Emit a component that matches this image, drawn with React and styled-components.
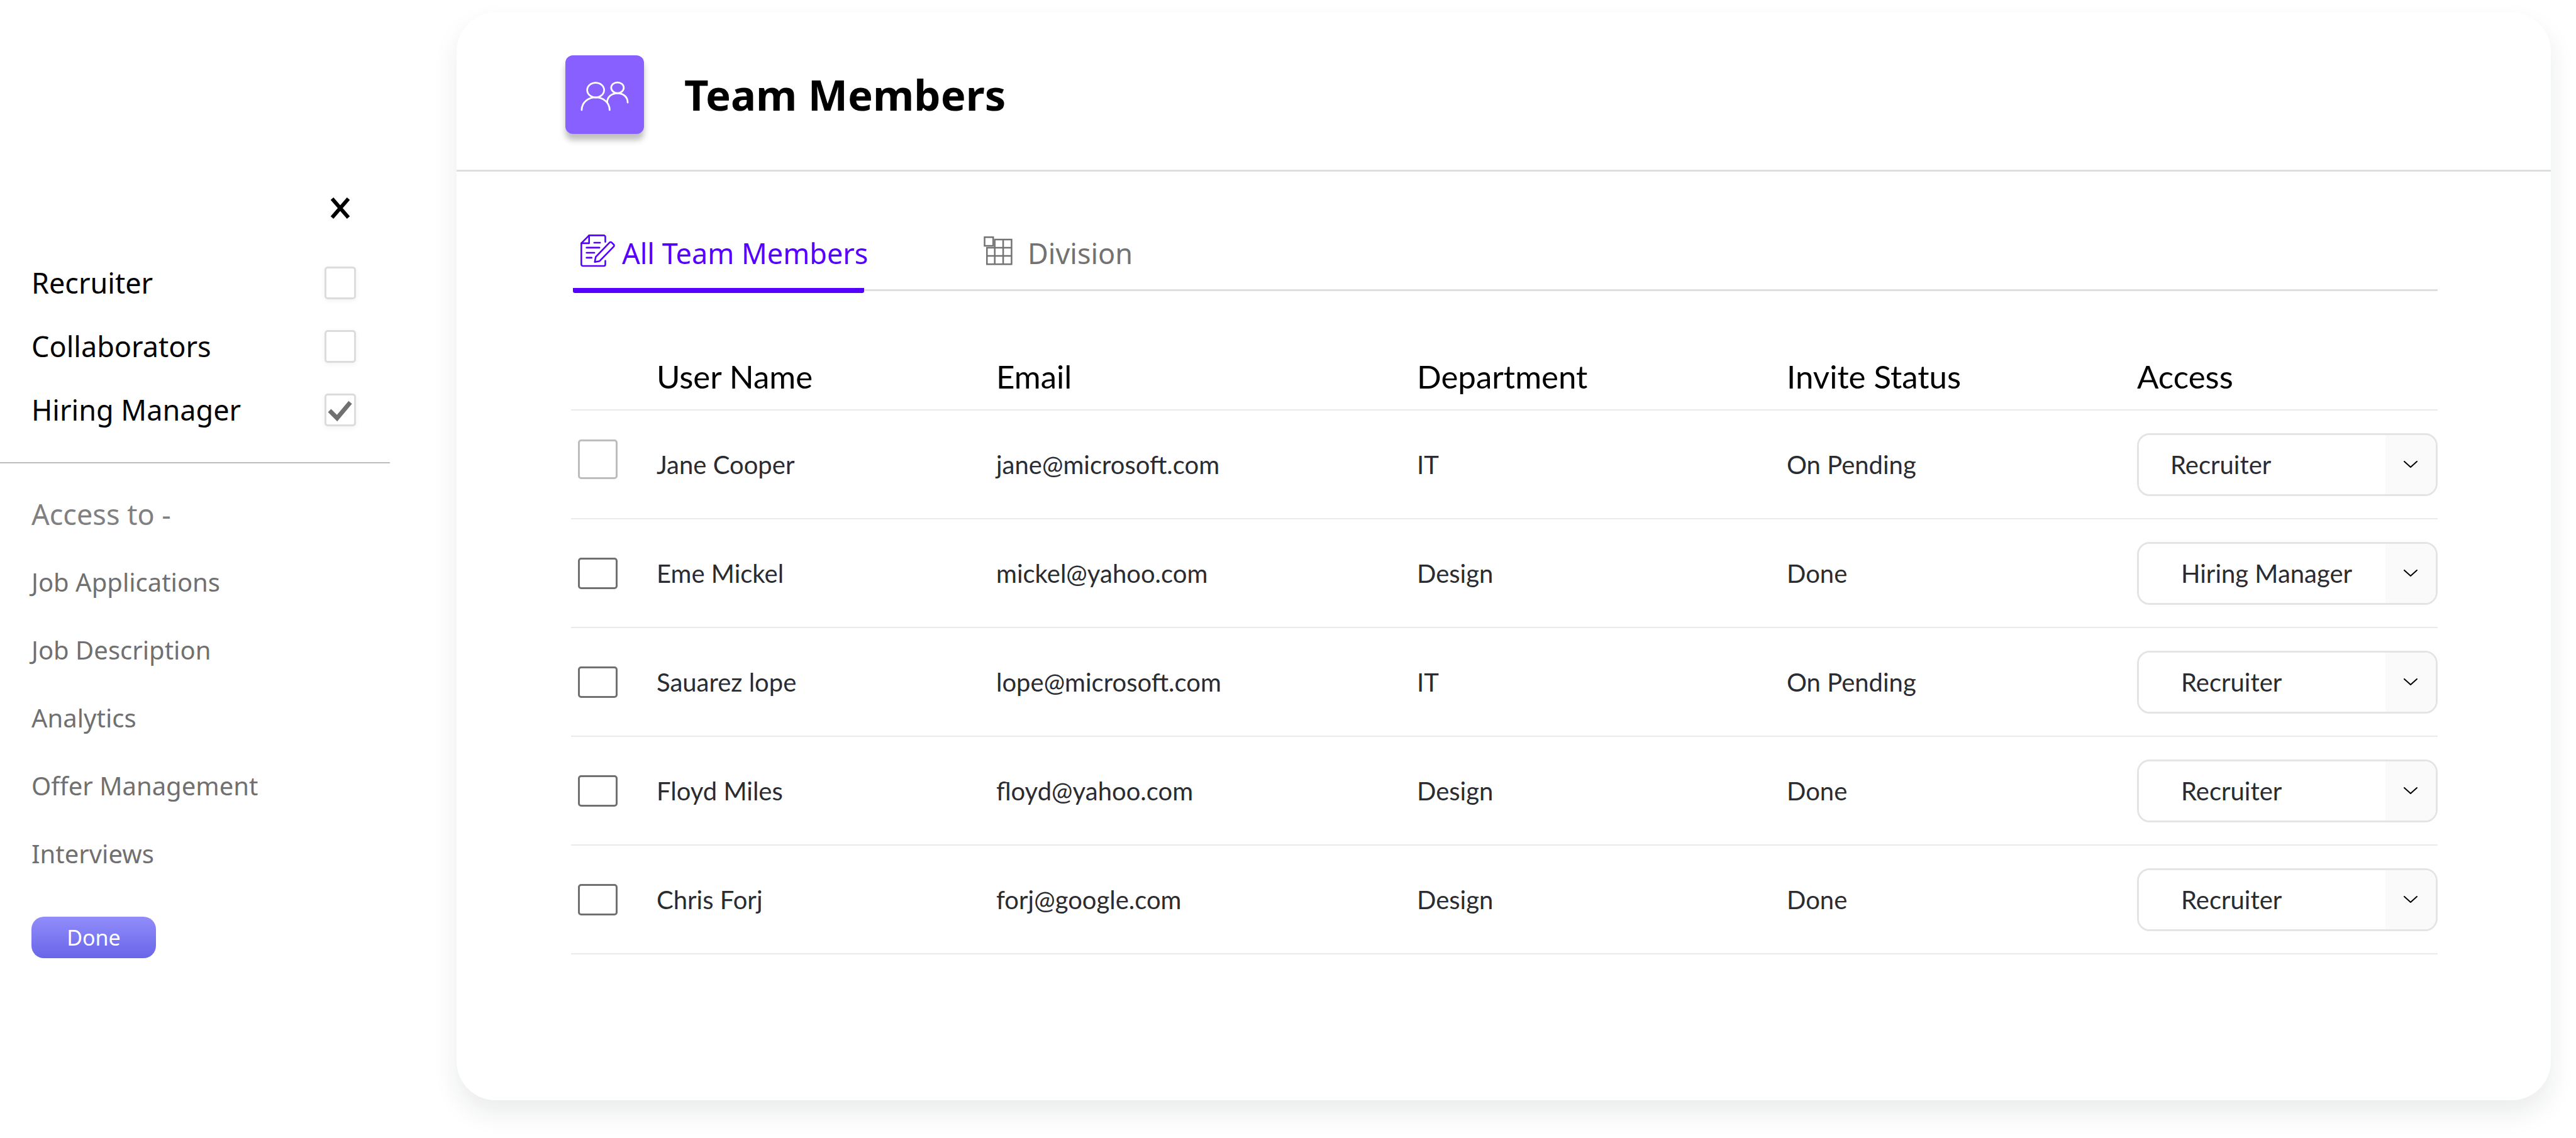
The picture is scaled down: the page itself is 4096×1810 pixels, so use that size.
import React from "react";
import styled, { createGlobalStyle, css } from "styled-components";

const GlobalStyle = createGlobalStyle`
  *, *::before, *::after { box-sizing: border-box; }
  body {
    margin: 0;
    background: #ffffff;
    color: #000000;
    font-family: "Noto Sans", sans-serif;
  }
  button, input, select { font: inherit; }
`;

const Page = styled.div`
  display: flex;
  align-items: flex-start;
  gap: 106px;
  min-height: 100vh;
  padding: 20px 40px 60px 0;
`;

/* ---------- sidebar ---------- */

const Sidebar = styled.aside`
  flex: 0 0 620px;
  display: flex;
  flex-direction: column;
  padding-top: 290px;
`;

const CloseButton = styled.button`
  align-self: flex-end;
  display: flex;
  align-items: center;
  justify-content: center;
  width: 50px;
  height: 42px;
  margin-right: 54px;
  padding: 0;
  border: 0;
  background: none;
`;

const RoleList = styled.div`
  display: flex;
  flex-direction: column;
  padding: 47px 54px 33px 50px;
  border-bottom: 2px solid #bcbcbc;
`;

const RoleLabel = styled.label`
  display: flex;
  align-items: center;
  justify-content: space-between;
  height: 101px;
  font-size: 45px;
  line-height: 60px;
`;

const tick = `url("data:image/svg+xml,%3Csvg xmlns='http://www.w3.org/2000/svg' viewBox='0 0 50 52'%3E%3Cpath d='M8 27l12 12L41 14' fill='none' stroke='%23707070' stroke-width='7'/%3E%3C/svg%3E")`;

const RoleCheckbox = styled.input`
  appearance: none;
  width: 50px;
  height: 52px;
  margin: 0;
  border: 3px solid #dcdcdc;
  border-radius: 5px;
  background: #ffffff;
  box-shadow: 0 2px 8px rgba(0, 0, 0, 0.06);
  &:checked {
    background: #ffffff ${tick} center / 50px 52px no-repeat;
  }
`;

const AccessTitle = styled.h2`
  margin: 0;
  padding: 51px 50px 0;
  color: #808080;
  font-size: 45px;
  font-weight: 400;
  line-height: 60px;
`;

const AccessList = styled.ul`
  display: flex;
  flex-direction: column;
  gap: 56px;
  margin: 0;
  padding: 52px 50px 74px;
  list-style: none;
  color: #707070;
  font-size: 40px;
  line-height: 52px;
`;

const DoneButton = styled.button`
  align-self: flex-start;
  width: 198px;
  height: 66px;
  margin-left: 50px;
  padding: 0;
  border: 0;
  border-radius: 20px;
  background: linear-gradient(#918dfb, #6965e8);
  color: #ffffff;
  font-size: 34px;
  line-height: 46px;
`;

/* ---------- card ---------- */

const Card = styled.main`
  flex: 1;
  min-width: 0;
  min-height: calc(100vh - 80px);
  border-radius: 62px;
  background: #ffffff;
  box-shadow: 0 20px 40px rgba(20, 32, 32, 0.09);
`;

const CardHeader = styled.header`
  display: flex;
  align-items: center;
  gap: 64px;
  height: 253px;
  padding: 10px 173px 0;
  border-bottom: 3px solid #dedede;
`;

const Badge = styled.div`
  display: flex;
  width: 125px;
  height: 125px;
  border-radius: 12px;
  background: #8860ff;
  box-shadow: 0 10px 10px rgba(0, 0, 0, 0.25);
`;

const Title = styled.h1`
  margin: 0;
  font-size: 67px;
  font-weight: 700;
  line-height: 90px;
`;

const CardBody = styled.div`
  padding: 84px 180px 0 182px;
`;

const Tabs = styled.nav`
  display: flex;
  gap: 178px;
  height: 106px;
  margin-left: 3px;
  border-bottom: 3px solid #dedede;
`;

const Tab = styled.a`
  display: flex;
  align-items: center;
  gap: ${(p) => (p.$active ? "10px" : "24px")};
  height: 109px;
  padding: 0 0 18px 12px;
  color: ${(p) => (p.$active ? "#5500ff" : "#727272")};
  font-size: 45px;
  line-height: 60px;
  text-decoration: none;
  white-space: nowrap;
  svg {
    flex: none;
    margin-bottom: 8px;
  }
  ${(p) =>
    p.$active &&
    css`
      width: 463px;
      padding-bottom: 10px;
      border-bottom: 8px solid #5500ff;
      border-radius: 3px;
    `}
`;

/* ---------- table ---------- */

const Table = styled.table`
  width: 100%;
  margin-top: 73px;
  border-spacing: 0;
  table-layout: fixed;
  text-align: left;
  font-family: Lato, "Noto Sans", sans-serif;
`;

const Column = styled.col`
  width: ${(p) => p.$width}px;
`;

const HeadCell = styled.th`
  height: 117px;
  padding: 10px 0 0;
  border-bottom: 2px solid #ebebeb;
  font-size: 51px;
  font-weight: 400;
  line-height: 64px;
`;

const Cell = styled.td`
  height: 173px;
  padding: 0;
  border-bottom: 2px solid #ebebeb;
  color: #2a2c31;
  font-size: 40px;
  line-height: 52px;
`;

const RowCheckbox = styled.input`
  appearance: none;
  display: block;
  width: 63px;
  height: ${(p) => (p.$tall ? 63 : 50)}px;
  margin: 0 0 ${(p) => (p.$tall ? 16 : 0)}px 11px;
  border: 3px solid ${(p) => (p.$tall ? "#bdbdbd" : "#707070")};
  border-radius: 5px;
  background: #ffffff;
`;

const SelectBox = styled.div`
  display: grid;
  grid-template-columns: 1fr 80px;
  height: 100px;
  overflow: hidden;
  border: 3px solid #e4e4e4;
  border-radius: 20px;
`;

const Select = styled.select`
  grid-area: 1 / 1 / 2 / 3;
  appearance: none;
  width: 100%;
  padding: 0 90px 0 ${(p) => p.$indent}px;
  border: 0;
  background: #ffffff;
  color: #2a2c31;
`;

const SelectArrow = styled.span`
  grid-area: 1 / 2;
  display: flex;
  align-items: center;
  justify-content: center;
  z-index: 1;
  background: #fafafa;
  pointer-events: none;
`;

/* ---------- icons ---------- */

const CloseIcon = () => (
  <svg width="32" height="34" viewBox="0 0 32 34" fill="none" stroke="#000" strokeWidth="6">
    <path d="M3 2l26 30M29 2l-26 30" />
  </svg>
);

const PeopleIcon = () => (
  <svg width="125" height="125" viewBox="0 0 200 200" fill="none" stroke="#fff" strokeWidth="4.4" strokeLinecap="round">
    <ellipse cx="77" cy="88.5" rx="21.5" ry="18.7" />
    <path d="M41.5 139c0-19 16-32 35.5-32s35.5 13 35.5 32" />
    <ellipse cx="132.5" cy="82.5" rx="16" ry="13.7" />
    <path d="M106.500 119c0-13 11-22.500 26-22.500s26 9.500 26 23.500" />
  </svg>
);

const NotesIcon = () => (
  <svg width="56" height="52" viewBox="0 0 90 83" fill="none" stroke="currentColor" strokeWidth="4.2" strokeLinecap="round" strokeLinejoin="round">
    <path d="M63.5 18.500V6a4 4 0 0 0-4-4H22L2.200 22v54a4 4 0 0 0 4 4h53.300a4 4 0 0 0 4-4V67" />
    <path d="M22 2v20H2.200" />
    <path d="M35 20.500h15M15.500 33.300h33M15.500 46.300h20M15.500 59h13" />
    <path d="M39 57l35.500-37a3.500 3.500 0 0 1 5 0l5.500 5.500a3.500 3.500 0 0 1 0 5L49 67.500 36.500 70z" />
  </svg>
);

const GridIcon = () => (
  <svg width="46" height="46" viewBox="0 0 73 74" fill="none" stroke="currentColor" strokeWidth="4">
    <path d="M2 2h22v22H2z" />
    <path d="M28 29V8h43v63H8V29h63M8 50h63M28 29v42M49.500 8v63" />
  </svg>
);

const ChevronIcon = () => (
  <svg width="22" height="12" viewBox="0 0 22 12" fill="none" stroke="#000" strokeWidth="2" strokeLinecap="round" strokeLinejoin="round">
    <path d="M1 1l10 9 10-9" />
  </svg>
);

/* ---------- data ---------- */

const roles = [
  { name: "Recruiter", checked: false },
  { name: "Collaborators", checked: false },
  { name: "Hiring Manager", checked: true },
];

const permissions = ["Job Applications", "Job Description", "Analytics", "Offer Management", "Interviews"];

const columns = [
  { label: "", width: 136 },
  { label: "User Name", width: 540 },
  { label: "Email", width: 669 },
  { label: "Department", width: 588 },
  { label: "Invite Status", width: 557 },
  { label: "Access", width: 478 },
];

const members = [
  { name: "Jane Cooper", email: "jane@microsoft.com", department: "IT", status: "On Pending", access: "Recruiter", tall: true },
  { name: "Eme Mickel", email: "mickel@yahoo.com", department: "Design", status: "Done", access: "Hiring Manager" },
  { name: "Sauarez lope", email: "lope@microsoft.com", department: "IT", status: "On Pending", access: "Recruiter" },
  { name: "Floyd Miles", email: "floyd@yahoo.com", department: "Design", status: "Done", access: "Recruiter" },
  { name: "Chris Forj", email: "forj@google.com", department: "Design", status: "Done", access: "Recruiter" },
];

function MemberRow({ member }) {
  return (
    <tr>
      <Cell>
        <RowCheckbox type="checkbox" aria-label={`Select ${member.name}`} $tall={member.tall} />
      </Cell>
      <Cell>{member.name}</Cell>
      <Cell>{member.email}</Cell>
      <Cell>{member.department}</Cell>
      <Cell>{member.status}</Cell>
      <Cell>
        <SelectBox>
          <Select aria-label={`Access for ${member.name}`} defaultValue={member.access} $indent={member.tall ? 50 : 67}>
            {roles.map((role) => (
              <option key={role.name}>{role.name}</option>
            ))}
          </Select>
          <SelectArrow>
            <ChevronIcon />
          </SelectArrow>
        </SelectBox>
      </Cell>
    </tr>
  );
}

export default function App() {
  return (
    <>
      <GlobalStyle />
      <Page>
        <Sidebar>
          <CloseButton type="button" aria-label="Close">
            <CloseIcon />
          </CloseButton>
          <RoleList>
            {roles.map((role) => (
              <RoleLabel key={role.name}>
                {role.name}
                <RoleCheckbox type="checkbox" defaultChecked={role.checked} />
              </RoleLabel>
            ))}
          </RoleList>
          <AccessTitle>Access to -</AccessTitle>
          <AccessList>
            {permissions.map((permission) => (
              <li key={permission}>{permission}</li>
            ))}
          </AccessList>
          <DoneButton type="button">Done</DoneButton>
        </Sidebar>

        <Card>
          <CardHeader>
            <Badge>
              <PeopleIcon />
            </Badge>
            <Title>Team Members</Title>
          </CardHeader>
          <CardBody>
            <Tabs>
              <Tab href="#all" $active>
                <NotesIcon />
                All Team Members
              </Tab>
              <Tab href="#division">
                <GridIcon />
                Division
              </Tab>
            </Tabs>
            <Table>
              <colgroup>
                {columns.map((column) => (
                  <Column key={column.label} $width={column.width} />
                ))}
              </colgroup>
              <thead>
                <tr>
                  {columns.map((column) => (
                    <HeadCell key={column.label} scope="col">
                      {column.label}
                    </HeadCell>
                  ))}
                </tr>
              </thead>
              <tbody>
                {members.map((member) => (
                  <MemberRow key={member.name} member={member} />
                ))}
              </tbody>
            </Table>
          </CardBody>
        </Card>
      </Page>
    </>
  );
}
